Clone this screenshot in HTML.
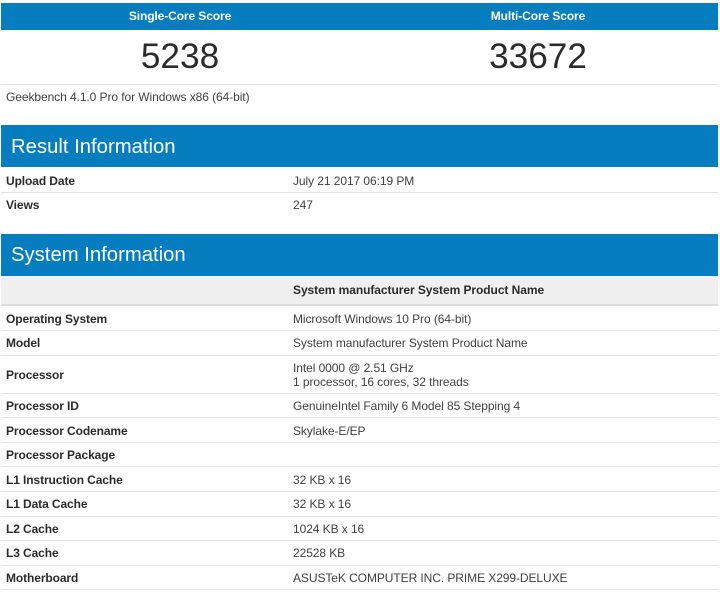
<!DOCTYPE html>
<html>
<head>
<meta charset="utf-8">
<style>
html,body{margin:0;padding:0;background:#fff;}
body{width:720px;height:592px;overflow:hidden;position:relative;font-family:"Liberation Sans",sans-serif;font-size:12px;color:#333;}
.a{position:absolute;white-space:nowrap;}
.blue{position:absolute;left:1px;width:717px;background:#057dbf;}
.line{position:absolute;left:1px;width:717px;height:1px;background:#e2e2e2;}
.l{position:absolute;left:6px;font-weight:bold;color:#2b2b2b;line-height:14px;white-space:nowrap;letter-spacing:-.1px;}
.v{position:absolute;left:293px;line-height:14px;white-space:nowrap;color:#404040;letter-spacing:-.075px;}
.h{position:absolute;left:11px;font-size:20.3px;line-height:24px;color:#fff;white-space:nowrap;}
.t{position:absolute;font-weight:bold;color:#fff;line-height:14px;text-align:center;white-space:nowrap;letter-spacing:-.1px;}
.n{position:absolute;font-size:35.2px;line-height:42px;color:#2b2b2b;text-align:center;}
</style>
</head>
<body>
<div class="blue" style="top:3px;height:27px"></div>
<div class="t" style="left:1px;width:358px;top:9px">Single-Core Score</div>
<div class="t" style="left:359px;width:358px;top:9px">Multi-Core Score</div>
<div class="n" style="left:1px;width:358px;top:36px">5238</div>
<div class="n" style="left:359px;width:358px;top:36px">33672</div>
<div class="line" style="top:84px"></div>
<div class="v" style="left:6px;top:90px">Geekbench 4.1.0 Pro for Windows x86 (64-bit)</div>

<div class="blue" style="top:125px;height:42px"></div>
<div class="h" style="top:135px">Result Information</div>
<div class="l" style="top:174px">Upload Date</div>
<div class="v" style="top:174px">July 21 2017 06:19 PM</div>
<div class="line" style="top:192px"></div>
<div class="l" style="top:198px">Views</div>
<div class="v" style="top:198px">247</div>

<div class="blue" style="top:234px;height:42px"></div>
<div class="h" style="top:243px">System Information</div>
<div class="a" style="left:1px;top:276px;width:717px;height:28px;background:#f0f0f0"></div>
<div class="a" style="left:1px;top:304px;width:717px;height:2px;background:#dedede"></div>
<div class="l" style="left:293px;top:283px;letter-spacing:-.06px">System manufacturer System Product Name</div>

<div class="l" style="top:312px">Operating System</div>
<div class="v" style="top:312px">Microsoft Windows 10 Pro (64-bit)</div>
<div class="line" style="top:330px"></div>
<div class="l" style="top:336px">Model</div>
<div class="v" style="top:336px">System manufacturer System Product Name</div>
<div class="line" style="top:355px"></div>
<div class="l" style="top:368px">Processor</div>
<div class="v" style="top:361px">Intel 0000 @ 2.51 GHz<br>1 processor, 16 cores, 32 threads</div>
<div class="line" style="top:393px"></div>
<div class="l" style="top:399px">Processor ID</div>
<div class="v" style="top:399px">GenuineIntel Family 6 Model 85 Stepping 4</div>
<div class="line" style="top:417px"></div>
<div class="l" style="top:424px">Processor Codename</div>
<div class="v" style="top:424px">Skylake-E/EP</div>
<div class="line" style="top:442px"></div>
<div class="l" style="top:448px">Processor Package</div>
<div class="line" style="top:466px"></div>
<div class="l" style="top:473px">L1 Instruction Cache</div>
<div class="v" style="top:473px">32 KB x 16</div>
<div class="line" style="top:491px"></div>
<div class="l" style="top:497px">L1 Data Cache</div>
<div class="v" style="top:497px">32 KB x 16</div>
<div class="line" style="top:516px"></div>
<div class="l" style="top:522px">L2 Cache</div>
<div class="v" style="top:522px">1024 KB x 16</div>
<div class="line" style="top:540px"></div>
<div class="l" style="top:546px">L3 Cache</div>
<div class="v" style="top:546px">22528 KB</div>
<div class="line" style="top:565px"></div>
<div class="l" style="top:571px">Motherboard</div>
<div class="v" style="top:571px">ASUSTeK COMPUTER INC. PRIME X299-DELUXE</div>
<div class="line" style="top:589px"></div>
</body>
</html>
